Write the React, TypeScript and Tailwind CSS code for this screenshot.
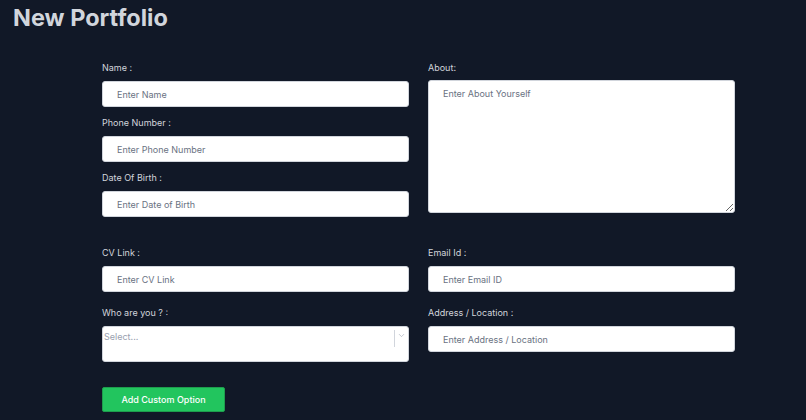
import React from 'react';
import { ChevronDown } from 'lucide-react';

const font = { fontFamily: 'Inter, "Noto Sans", sans-serif' };

interface FieldProps {
  label: string;
  placeholder: string;
  className?: string;
}

const Field: React.FC<FieldProps> = ({ label, placeholder, className = '' }) => (
  <div className={`flex flex-col ${className}`}>
    <label className="h-[12px] leading-[12px] text-[9px] text-gray-300 mb-[7px]">{label}</label>
    <input
      type="text"
      placeholder={placeholder}
      className="h-[26px] w-full rounded-[3px] border border-gray-300 bg-white px-[14px] text-[9px] text-gray-700 placeholder:text-gray-500 outline-none"
    />
  </div>
);

export default function App() {
  return (
    <div className="min-h-[420px] w-full bg-[#111827] overflow-hidden" style={font}>
      <h1 className="pt-[2px] px-[13px] text-[23.5px] leading-[32px] font-bold text-gray-300">New Portfolio</h1>

      <form className="ml-[102px] w-[633px] mt-[28px]">
        <div className="grid grid-cols-[307px_307px] gap-x-[19px]">
          <div className="flex flex-col">
            <Field label="Name :" placeholder="Enter Name" className="mb-[10px]" />
            <Field label="Phone Number :" placeholder="Enter Phone Number" className="mb-[10px]" />
            <Field label="Date Of Birth :" placeholder="Enter Date of Birth" />
          </div>
          <div className="flex flex-col">
            <label className="h-[12px] leading-[12px] text-[9px] text-gray-300 mb-[6px]">About:</label>
            <textarea
              placeholder="Enter About Yourself"
              className="h-[133px] w-full rounded-[3px] border border-gray-300 bg-white px-[14px] py-[6px] text-[9px] text-gray-700 placeholder:text-gray-500 outline-none"
            />
          </div>
        </div>

        <div className="grid grid-cols-[307px_307px] gap-x-[19px] mt-[30px]">
          <Field label="CV Link :" placeholder="Enter CV Link" className="mb-[15px]" />
          <Field label="Email Id :" placeholder="Enter Email ID" className="mb-[15px]" />

          <div className="flex flex-col">
            <label className="h-[12px] leading-[12px] text-[9px] text-gray-300 mb-[7px]">Who are you ? :</label>
            <div className="h-[36px] w-full rounded-[3px] border border-gray-300 bg-white flex items-start">
              <span className="flex-1 pl-[1px] pt-[3px] text-[9px] text-gray-400">Select...</span>
              <div className="flex items-start pt-[3px]">
                <span className="w-px h-[17px] bg-gray-300" />
                <ChevronDown className="w-[9px] h-[9px] ml-[2px] mr-[2px] mt-[1px] text-gray-400" strokeWidth={1.5} />
              </div>
            </div>
          </div>
          <Field label="Address / Location :" placeholder="Enter Address / Location" />
        </div>

        <button
          type="button"
          className="mt-[25px] h-[25px] w-[123px] rounded-[2px] bg-[#22c55e] border border-[#1e9d4d] text-[9px] font-medium text-white"
        >
          Add Custom Option
        </button>
      </form>
    </div>
  );
}
